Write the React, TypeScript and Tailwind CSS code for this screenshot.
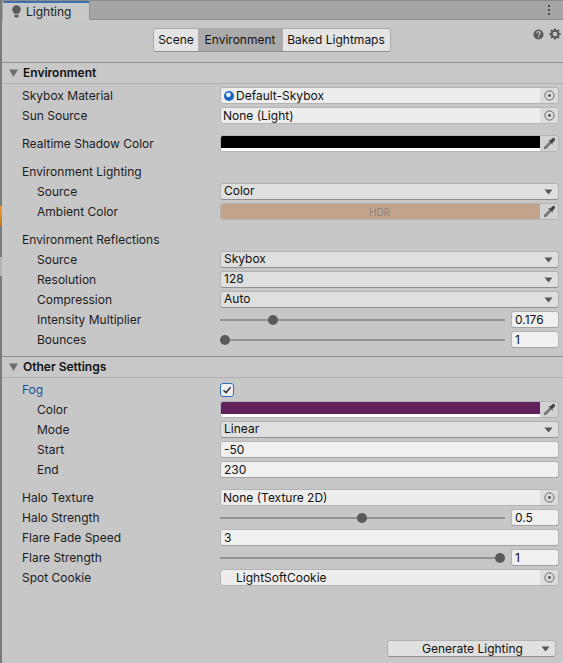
import React from "react";

const Picker = () => (
  <div className="w-[18px] shrink-0 self-stretch bg-[#dcdcdc] flex items-center justify-center">
    <svg width="11" height="11" viewBox="0 0 11 11">
      <circle cx="5.5" cy="5.5" r="4.6" fill="none" stroke="#666" strokeWidth="1" />
      <circle cx="5.5" cy="5.5" r="1.4" fill="#555" />
    </svg>
  </div>
);

const Dropper = () => (
  <div className="w-[18px] shrink-0 self-stretch bg-[#d2d2d2] flex items-center justify-center">
    <svg width="13" height="13" viewBox="0 0 13 13">
      <path d="M1 12 L1 10 L6.5 4.5 L8.5 6.5 L3 12 Z" fill="#777" />
      <path d="M5 3 L7 3.6 L9.5 1.2 Q10.6 .4 11.6 1.4 Q12.6 2.4 11.8 3.5 L9.4 6 L10 8 Z" fill="#444" />
    </svg>
  </div>
);

const Arrow = () => (
  <svg width="9" height="6" viewBox="0 0 9 6" className="shrink-0">
    <path d="M.5 .6 H8.5 L4.5 5.6 Z" fill="#555" />
  </svg>
);

const Row = ({ label, indent, blue, children }: { label: string; indent?: boolean; blue?: boolean; children?: React.ReactNode }) => (
  <div className={`h-5 flex items-center ${indent ? "pl-[35px]" : "pl-[20px]"} pr-[4px]`}>
    <div className={`${indent ? "w-[183px]" : "w-[198px]"} shrink-0 ${blue ? "text-[#1c4f9c]" : "text-[#1c1c1c]"}`}>{label}</div>
    <div className="flex-1 min-w-0 h-[17px] self-start mt-[1px] flex items-center">{children}</div>
  </div>
);

const TextField = ({ value }: { value: string }) => (
  <div className="w-full h-[17px] bg-[#f0f0f0] rounded-[3px] border border-[#b4b4b4] border-b-[#a2a2a2] pl-[3px] flex items-center text-[#111]">{value}</div>
);

const Select = ({ value }: { value: string }) => (
  <div className="w-full h-[17px] bg-[#dfdfdf] rounded-[3px] border border-[#b2b2b2] border-b-[#8f8f8f] pl-[3px] pr-[5px] flex items-center justify-between text-[#111]">
    <span className="pb-[1px]">{value}</span>
    <Arrow />
  </div>
);

const ObjectField = ({ value, icon, pad }: { value: string; icon?: boolean; pad?: boolean }) => (
  <div className="w-full h-[17px] bg-[#ededed] rounded-[3px] border border-[#b4b4b4] flex items-center overflow-hidden text-[#111]">
    {icon && (
      <svg width="10" height="10" viewBox="0 0 10 10" className="ml-[3px] mr-[2px] shrink-0">
        <circle cx="5" cy="5" r="5" fill="#1565c8" />
        <circle cx="4.4" cy="3.8" r="2.4" fill="#f2f6ff" />
      </svg>
    )}
    <span className={`flex-1 min-w-0 ${pad ? "pl-[15px]" : icon ? "" : "pl-[2px]"}`}>{value}</span>
    <Picker />
  </div>
);

const ColorField = ({ color, white, children }: { color: string; white?: boolean; children?: React.ReactNode }) => (
  <div className="w-full h-[17px] rounded-[3px] border border-[#b4b4b4] flex items-stretch overflow-hidden">
    <div className="flex-1 min-w-0 flex flex-col">
      <div className="flex-1 flex items-center justify-center pr-[2px] text-[10px] text-[#8a857d]" style={{ backgroundColor: color }}>{children}</div>
      {white && <div className="h-[3px] bg-white" />}
    </div>
    <Dropper />
  </div>
);

const Slider = ({ pos, value }: { pos: number; value: string }) => (
  <div className="w-full flex items-center gap-[6px]">
    <div className="relative flex-1 h-[2px] bg-[#929292]">
      <div className="absolute top-[-4px] size-[10px] rounded-full bg-[#5a5a5a]" style={{ left: pos }} />
    </div>
    <div className="w-[48px] shrink-0">
      <TextField value={value} />
    </div>
  </div>
);

const Section = ({ title }: { title: string }) => (
  <div className="h-[22px] flex items-center border-t border-b border-t-[#8f8f8f] border-b-[#b0b0b0] bg-[#c8c8c8]">
    <svg width="9" height="8" viewBox="0 0 9 8" className="ml-[7px] mr-[5px] shrink-0">
      <path d="M0 .4 H9 L4.5 8 Z" fill="#6e6e6e" />
    </svg>
    <span className="font-semibold text-[#111]">{title}</span>
  </div>
);

export default function App() {
  return (
    <div className="w-[563px] h-[663px] overflow-hidden flex bg-[#c7c7c7] text-[12px] leading-none font-['Inter',sans-serif]">
      <div className="w-[2px] shrink-0 flex flex-col bg-[#7a7a7a]">
        <div className="h-[206px]" />
        <div className="h-[20px] bg-gradient-to-b from-[#f0a030] to-[#c8781a]" />
        <div className="h-[31px]" />
        <div className="h-[19px] bg-[#b4b4b4]" />
        <div className="flex-1" />
      </div>
      <div className="flex-1 min-w-0 flex flex-col">
        <div className="h-[1px] bg-[#8a8a8a]" />
        <div className="h-[19px] bg-[#a5a5a5] border-b border-[#8f8f8f] flex items-stretch relative">
          <div className="w-[87px] ml-[1px] h-[19px] bg-[#c8c8c8] border-t-2 border-[#3a72b0] rounded-t-[2px] border-r border-r-[#949494] flex items-center pl-[9px] gap-[5px] text-[#222]">
            <svg width="9" height="13" viewBox="0 0 9 13" className="shrink-0">
              <path d="M4.5 .3 C2 .3 .2 2.2 .2 4.5 C.2 6.4 1.4 7.4 2.2 8.8 L6.8 8.8 C7.6 7.4 8.8 6.4 8.8 4.5 C8.8 2.2 7 .3 4.5 .3 Z" fill="#5a5a5a" />
              <rect x="2.4" y="9.8" width="4.2" height="2.6" rx=".8" fill="#5a5a5a" />
            </svg>
            <span>Lighting</span>
          </div>
          <div className="absolute right-[13px] top-[4px] flex flex-col gap-[2px]">
            <span className="size-[2px] bg-[#4e4e4e]" />
            <span className="size-[2px] bg-[#4e4e4e]" />
            <span className="size-[2px] bg-[#4e4e4e]" />
          </div>
        </div>
        <div className="h-[42px] relative flex items-start justify-center pt-[8px] pr-[21px]">
          <div className="flex h-[24px] rounded-[3px] border border-[#a9a9a9] border-b-[#8f8f8f] text-[#111] overflow-hidden">
            <div className="w-[44px] bg-[#e4e4e4] flex items-center justify-center">Scene</div>
            <div className="w-[85px] bg-[#ababab] flex items-center justify-center pr-[1px]">Environment</div>
            <div className="w-[107px] bg-[#e4e4e4] flex items-center justify-center pr-[1px]">Baked Lightmaps</div>
          </div>
          <div className="absolute right-[2px] top-[8px] flex items-center gap-[5px]">
            <svg width="11" height="11" viewBox="0 0 11 11">
              <circle cx="5.5" cy="5.5" r="5" fill="#5c5c5c" />
              <path d="M3.8 4.3 Q3.9 2.7 5.5 2.7 Q7.2 2.7 7.2 4.1 Q7.2 5 6.2 5.5 Q5.6 5.8 5.6 6.5" fill="none" stroke="#c8c8c8" strokeWidth="1.2" />
              <rect x="5" y="7.4" width="1.2" height="1.2" fill="#c8c8c8" />
            </svg>
            <svg width="12" height="12" viewBox="0 0 12 12">
              <circle cx="6" cy="6" r="3.4" fill="none" stroke="#5c5c5c" strokeWidth="2.2" />
              <path d="M6 .4V2.6M6 9.4V11.6M.4 6H2.6M9.4 6H11.6M2 2L3.6 3.6M8.4 8.4L10 10M10 2L8.4 3.6M3.6 8.4L2 10" stroke="#5c5c5c" strokeWidth="2" />
            </svg>
          </div>
        </div>
        <Section title="Environment" />
        <div className="h-[2px]" />
        <Row label="Skybox Material"><ObjectField value="Default-Skybox" icon /></Row>
        <Row label="Sun Source"><ObjectField value="None (Light)" /></Row>
        <div className="h-2" />
        <Row label="Realtime Shadow Color"><ColorField color="#000000" white /></Row>
        <div className="h-2" />
        <Row label="Environment Lighting" />
        <Row label="Source" indent><Select value="Color" /></Row>
        <Row label="Ambient Color" indent><ColorField color="#c2a48d">HDR</ColorField></Row>
        <div className="h-2" />
        <Row label="Environment Reflections" />
        <Row label="Source" indent><Select value="Skybox" /></Row>
        <Row label="Resolution" indent><Select value="128" /></Row>
        <Row label="Compression" indent><Select value="Auto" /></Row>
        <Row label="Intensity Multiplier" indent><Slider pos={48} value="0.176" /></Row>
        <Row label="Bounces" indent><Slider pos={0} value="1" /></Row>
        <div className="h-[6px]" />
        <Section title="Other Settings" />
        <div className="h-[2px]" />
        <Row label="Fog" blue>
          <div className="size-[14px] rounded-[3px] bg-[#efefef] border border-[#2a6fc0] flex items-center justify-center">
            <svg width="10" height="10" viewBox="0 0 10 10">
              <path d="M1.5 5.2 L4 7.6 L8.6 2.2" fill="none" stroke="#333" strokeWidth="1.5" />
            </svg>
          </div>
        </Row>
        <Row label="Color" indent><ColorField color="#62205d" white /></Row>
        <Row label="Mode" indent><Select value="Linear" /></Row>
        <Row label="Start" indent><TextField value="-50" /></Row>
        <Row label="End" indent><TextField value="230" /></Row>
        <div className="h-2" />
        <Row label="Halo Texture"><ObjectField value="None (Texture 2D)" /></Row>
        <Row label="Halo Strength"><Slider pos={137} value="0.5" /></Row>
        <Row label="Flare Fade Speed"><TextField value="3" /></Row>
        <Row label="Flare Strength"><Slider pos={275} value="1" /></Row>
        <Row label="Spot Cookie"><ObjectField value="LightSoftCookie" pad /></Row>
        <div className="flex-1 flex items-end justify-end pr-[7px] pb-[6px]">
          <div className="w-[169px] h-[17px] bg-[#e0e0e0] rounded-[3px] border border-[#b2b2b2] border-b-[#8f8f8f] flex items-center pr-[5px] text-[#111]">
            <span className="flex-1 pl-[34px]">Generate Lighting</span>
            <Arrow />
          </div>
        </div>
      </div>
    </div>
  );
}
